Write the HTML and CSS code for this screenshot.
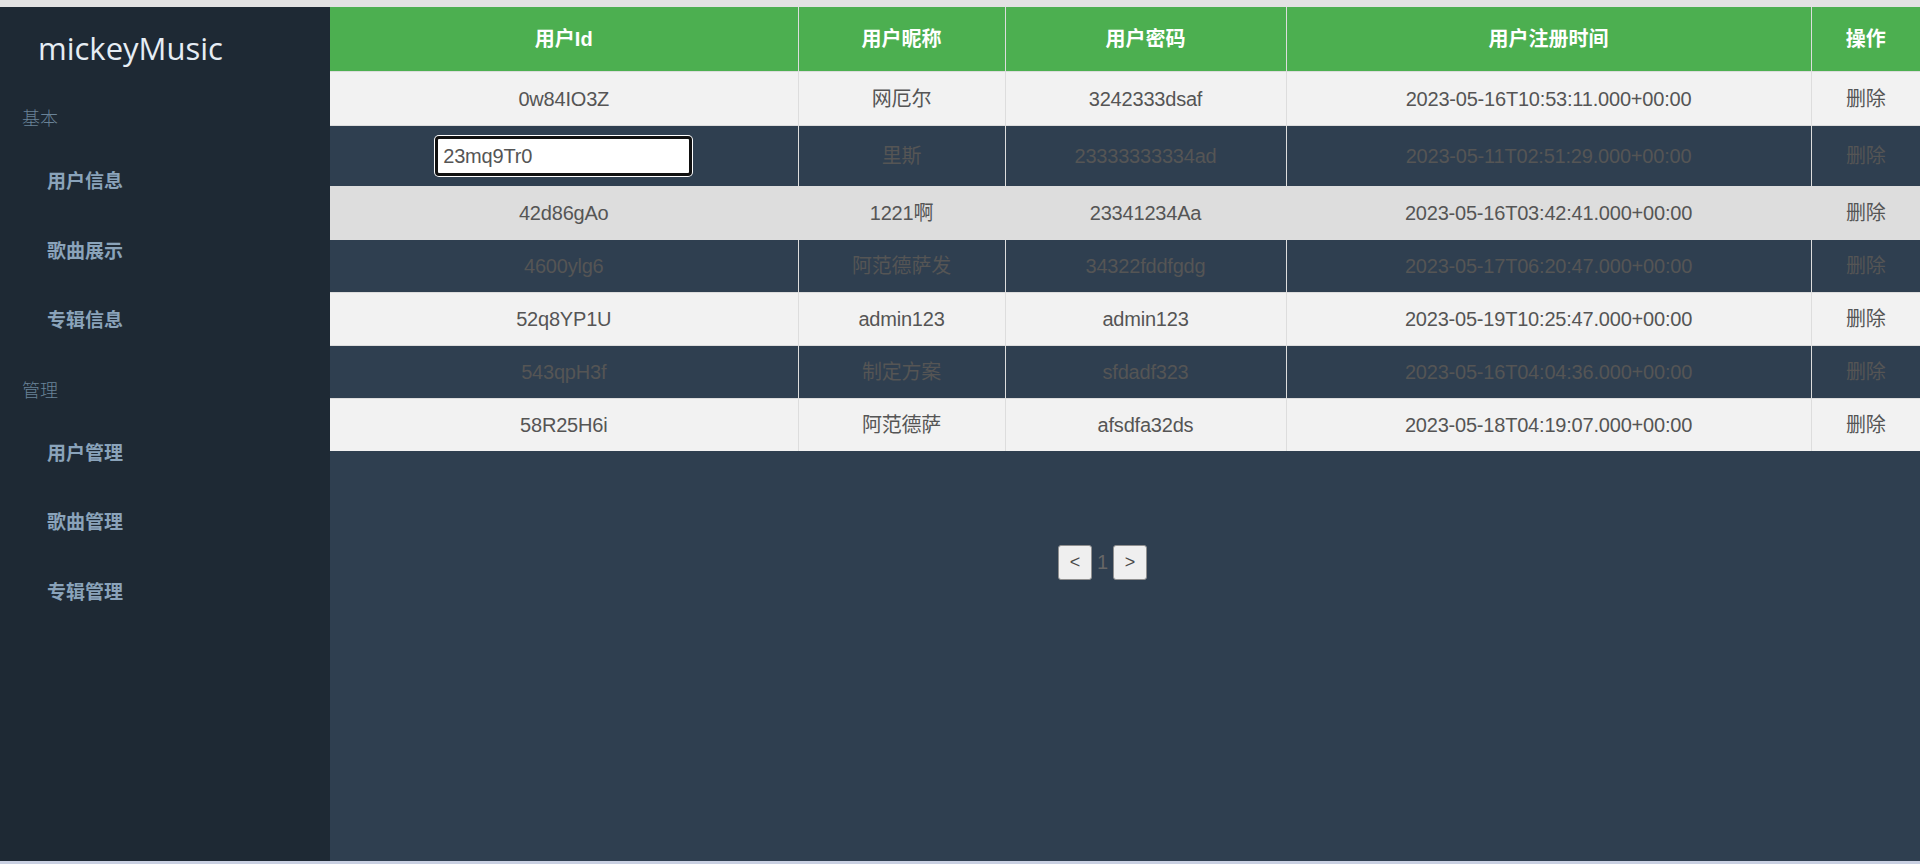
FILE: index.html
```html
<!DOCTYPE html>
<html lang="zh-CN">
<head>
<meta charset="utf-8">
<title>mickeyMusic</title>
<link rel="stylesheet" href="styles.css">
</head>
<body>
<div class="app">
  <aside class="sidebar">
    <div class="brand">mickeyMusic</div>
    <div class="group">
      <div class="group-label">基本</div>
      <a class="nav-item">用户信息</a>
      <a class="nav-item">歌曲展示</a>
      <a class="nav-item">专辑信息</a>
    </div>
    <div class="group">
      <div class="group-label">管理</div>
      <a class="nav-item">用户管理</a>
      <a class="nav-item">歌曲管理</a>
      <a class="nav-item">专辑管理</a>
    </div>
  </aside>
  <main class="main">
    <table class="users">
      <colgroup>
        <col class="c-id">
        <col class="c-name">
        <col class="c-pwd">
        <col class="c-time">
        <col class="c-op">
      </colgroup>
      <thead>
        <tr>
          <th>用户Id</th>
          <th>用户昵称</th>
          <th>用户密码</th>
          <th>用户注册时间</th>
          <th>操作</th>
        </tr>
      </thead>
      <tbody>
        <tr><td>0w84IO3Z</td><td>网厄尔</td><td>3242333dsaf</td><td>2023-05-16T10:53:11.000+00:00</td><td>删除</td></tr>
        <tr><td class="edit-cell"><input class="edit-input" type="text" value="23mq9Tr0"></td><td>里斯</td><td>23333333334ad</td><td>2023-05-11T02:51:29.000+00:00</td><td>删除</td></tr>
        <tr class="is-hover"><td>42d86gAo</td><td>1221啊</td><td>23341234Aa</td><td>2023-05-16T03:42:41.000+00:00</td><td>删除</td></tr>
        <tr><td>4600ylg6</td><td>阿范德萨发</td><td>34322fddfgdg</td><td>2023-05-17T06:20:47.000+00:00</td><td>删除</td></tr>
        <tr><td>52q8YP1U</td><td>admin123</td><td>admin123</td><td>2023-05-19T10:25:47.000+00:00</td><td>删除</td></tr>
        <tr><td>543qpH3f</td><td>制定方案</td><td>sfdadf323</td><td>2023-05-16T04:04:36.000+00:00</td><td>删除</td></tr>
        <tr><td>58R25H6i</td><td>阿范德萨</td><td>afsdfa32ds</td><td>2023-05-18T04:19:07.000+00:00</td><td>删除</td></tr>
      </tbody>
    </table>
    <div class="pager">
      <button class="page-btn" type="button">&lt;</button>
      <span class="page-num">1</span>
      <button class="page-btn" type="button">&gt;</button>
    </div>
  </main>
</div>
</body>
</html>
```

FILE: styles.css
```css
html, body {
  margin: 0;
  padding: 0;
}

body {
  background: #e2e2e2;
  padding-top: 7px;
  font-family: "Liberation Sans", Arial, "Noto Sans CJK SC", sans-serif;
}

.app {
  display: flex;
  height: 854px;
  border-bottom: 3px solid #c9d0e2;
}

.sidebar {
  flex: none;
  width: 330px;
  background: #1e2934;
}

.brand {
  height: 82px;
  line-height: 82px;
  padding-left: 38px;
  font-family: "Open Sans", "Noto Sans", sans-serif;
  font-size: 31px;
  font-weight: 500;
  color: #e6edf4;
}

.group + .group {
  margin-top: 7px;
}

.group-label {
  height: 56px;
  line-height: 56px;
  padding-left: 22px;
  font-family: "Noto Sans CJK SC", sans-serif;
  font-size: 18px;
  font-weight: 300;
  color: #6a8398;
}

.nav-item {
  display: block;
  height: 69.5px;
  line-height: 69.5px;
  padding-left: 47px;
  font-family: "Noto Sans CJK SC", sans-serif;
  font-size: 19px;
  font-weight: 700;
  color: #8aa3ba;
}

.main {
  flex: 1;
  background: #2f3f50;
}

.users {
  width: 100%;
  table-layout: fixed;
  border-collapse: collapse;
  border-style: hidden;
}

.c-id { width: 468px; }
.c-name { width: 207px; }
.c-pwd { width: 281px; }
.c-time { width: 525px; }
.c-op { width: 109px; }

.users th {
  background: #4caf50;
  color: #fff;
  font-family: "Liberation Sans", Arial, "Noto Sans CJK SC", sans-serif;
  font-size: 20px;
  font-weight: 700;
  line-height: 35px;
  padding: 14.5px 0;
  border: 1px solid #ddd;
  text-align: center;
}

.users td {
  padding: 9px 0;
  line-height: 34px;
  font-size: 20px;
  letter-spacing: -0.2px;
  color: #555;
  text-align: center;
  border: 1px solid #ddd;
}

.users tbody tr:first-child td {
  padding-top: 10px;
}

.users tbody tr:nth-child(odd) {
  background: #f2f2f2;
}

.users tbody tr.is-hover {
  background: #ddd;
}

.edit-input {
  display: block;
  box-sizing: border-box;
  width: 257px;
  height: 40px;
  margin: 1px auto;
  padding: 0 5px;
  border: 3px solid #111;
  border-radius: 4px;
  box-shadow: 0 0 0 1px #fff;
  background: #fff;
  outline: none;
  font-family: "Liberation Sans", Arial, sans-serif;
  font-size: 20px;
  letter-spacing: -0.2px;
  color: #555;
}

.pager {
  display: flex;
  justify-content: center;
  align-items: center;
  gap: 5px;
  padding-top: 94px;
  padding-right: 45px;
}

.page-btn {
  box-sizing: border-box;
  width: 34px;
  height: 35px;
  padding: 0;
  background: #efefef;
  border: 1px solid #8f8f8f;
  border-radius: 3px;
  font-family: "Liberation Sans", Arial, sans-serif;
  font-size: 18px;
  color: #4a4a4a;
}

.page-num {
  font-size: 20px;
  color: #666;
  width: 11px;
  text-align: center;
}
```
